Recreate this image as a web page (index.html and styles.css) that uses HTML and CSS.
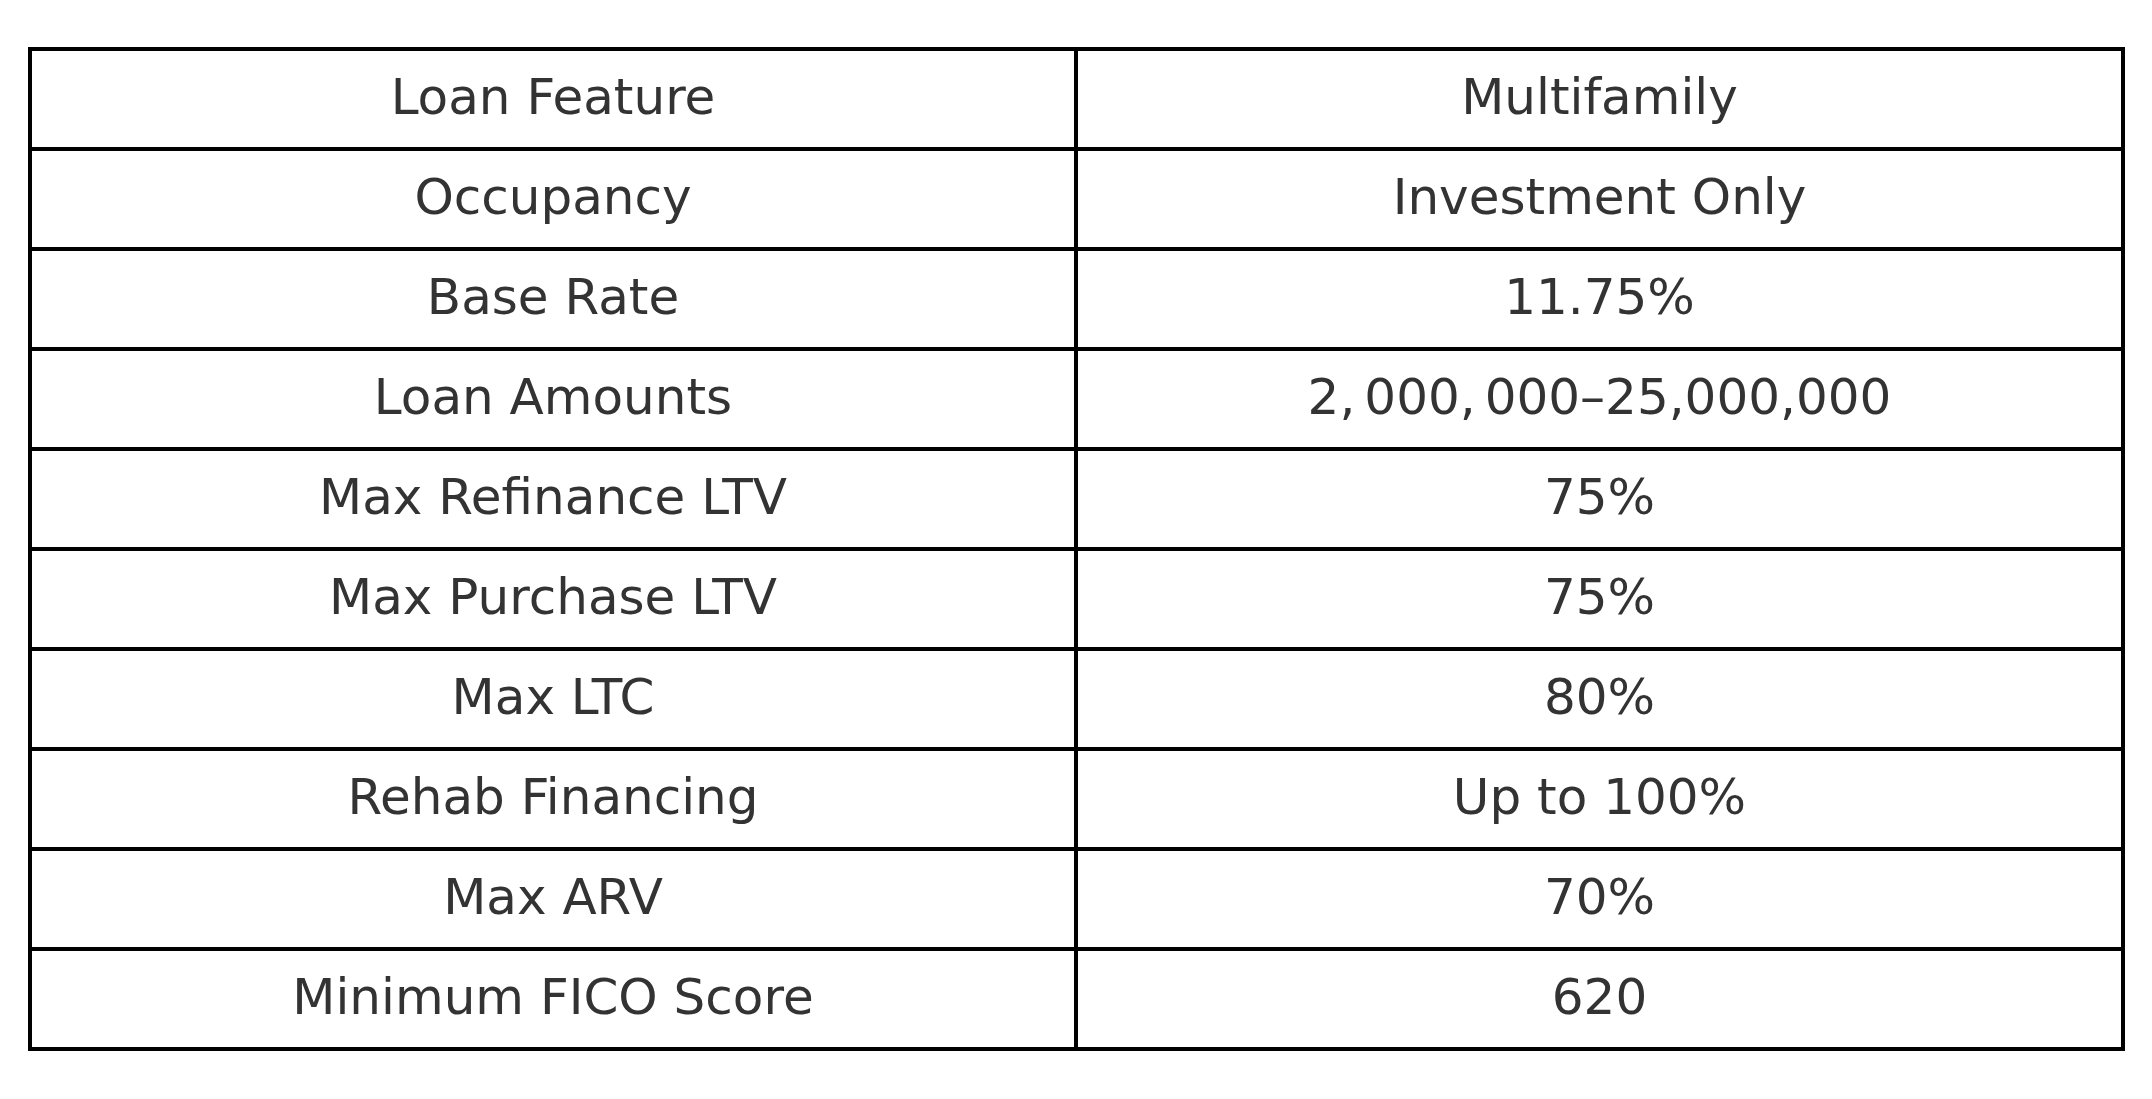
FILE: index.html
```html
<!DOCTYPE html>
<html>
<head>
<meta charset="utf-8">
<link rel="stylesheet" href="styles.css">
</head>
<body>
<div class="page">
  <div class="table">
    <div class="cell left">Loan Feature</div><div class="cell">Multifamily</div>
    <div class="cell left">Occupancy</div><div class="cell">Investment Only</div>
    <div class="cell left">Base Rate</div><div class="cell">11.75%</div>
    <div class="cell left">Loan Amounts</div><div class="cell">2,<span class="gap"> </span>000,<span class="gap"> </span>000–25,000,000</div>
    <div class="cell left">Max Refinance LTV</div><div class="cell">75%</div>
    <div class="cell left">Max Purchase LTV</div><div class="cell">75%</div>
    <div class="cell left">Max LTC</div><div class="cell">80%</div>
    <div class="cell left">Rehab Financing</div><div class="cell">Up to 100%</div>
    <div class="cell left">Max ARV</div><div class="cell">70%</div>
    <div class="cell left last">Minimum FICO Score</div><div class="cell last">620</div>
  </div>
</div>
</body>
</html>
```

FILE: styles.css
```css
html, body {
  margin: 0;
  padding: 0;
  background: #ffffff;
}
.page {
  padding: 47px 0 0 28px;
}
.table {
  display: grid;
  grid-template-columns: 1046px 1043px;
  grid-template-rows: repeat(9, 100px) 96px;
  width: 2089px;
  border: 4px solid #000;
  font-family: "DejaVu Sans", sans-serif;
  font-size: 50px;
  color: #333333;
}
.cell {
  box-sizing: border-box;
  display: flex;
  align-items: center;
  justify-content: center;
  border-bottom: 4px solid #000;
  padding-bottom: 4px;
  white-space: pre;
}
.cell.last {
  border-bottom: none;
}
.left {
  border-right: 4px solid #000;
}
.gap {
  display: inline-block;
  width: 9px;
}
```
